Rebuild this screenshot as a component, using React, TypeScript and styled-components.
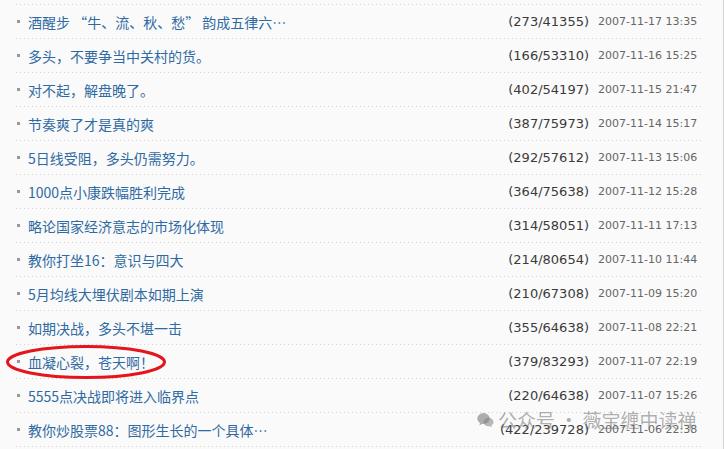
import styled, { createGlobalStyle } from "styled-components";

interface Post {
  title: string;
  replies: number;
  views: number;
  date: string;
  marked?: boolean;
}

const posts: Post[] = [
  { title: "酒醒步 “牛、流、秋、愁” 韵成五律六…", replies: 273, views: 41355, date: "2007-11-17 13:35" },
  { title: "多头，不要争当中关村的货。", replies: 166, views: 53310, date: "2007-11-16 15:25" },
  { title: "对不起，解盘晚了。", replies: 402, views: 54197, date: "2007-11-15 21:47" },
  { title: "节奏爽了才是真的爽", replies: 387, views: 75973, date: "2007-11-14 15:17" },
  { title: "5日线受阻，多头仍需努力。", replies: 292, views: 57612, date: "2007-11-13 15:06" },
  { title: "1000点小康跌幅胜利完成", replies: 364, views: 75638, date: "2007-11-12 15:28" },
  { title: "略论国家经济意志的市场化体现", replies: 314, views: 58051, date: "2007-11-11 17:13" },
  { title: "教你打坐16：意识与四大", replies: 214, views: 80654, date: "2007-11-10 11:44" },
  { title: "5月均线大埋伏剧本如期上演", replies: 210, views: 67308, date: "2007-11-09 15:20" },
  { title: "如期决战，多头不堪一击", replies: 355, views: 64638, date: "2007-11-08 22:21" },
  { title: "血凝心裂，苍天啊！", replies: 379, views: 83293, date: "2007-11-07 22:19", marked: true },
  { title: "5555点决战即将进入临界点", replies: 220, views: 64638, date: "2007-11-07 15:26" },
  { title: "教你炒股票88：图形生长的一个具体…", replies: 422, views: 239728, date: "2007-11-06 22:38" },
];

const GlobalStyle = createGlobalStyle`
  html, body {
    margin: 0;
    padding: 0;
    background: #ffffff;
    overflow: hidden;
  }
`;

// Panel holding the list, with its grey right edge
const Panel = styled.div`
  position: relative;
  width: 686px;
  height: 449px;
  padding: 4px 21px 0 16px;
  background: #fafafa;
  border-right: 1px solid #d4d4d4;
`;

const List = styled.ul`
  list-style: none;
  margin: 0;
  padding: 0;
  background-image: linear-gradient(to right, #d2d2d2 1px, transparent 1px);
  background-size: 4px 1px;
  background-repeat: repeat-x;
  background-position: 0 0;
  padding-top: 1px;
`;

// One post row with dotted rule underneath
const Row = styled.li`
  position: relative;
  display: flex;
  align-items: center;
  height: 33px;
  background-image: linear-gradient(to right, #d2d2d2 1px, transparent 1px);
  background-size: 4px 1px;
  background-repeat: repeat-x;
  background-position: 0 100%;
  padding-bottom: 1px;
`;

const Bullet = styled.span`
  width: 3px;
  height: 3px;
  margin: 0 8px 0 1px;
  background: #999999;
  flex-shrink: 0;
`;

const Title = styled.a`
  flex: 1;
  font-family: "Noto Sans CJK SC", "DejaVu Sans", sans-serif;
  font-size: 14px;
  color: #2f6aa3;
  text-decoration: none;
  white-space: nowrap;
`;

const Count = styled.span`
  font-family: "DejaVu Sans", Verdana, sans-serif;
  font-size: 13px;
  color: #3a3a3a;
  text-align: right;
`;

const DateText = styled.span`
  width: 104px;
  margin-left: 9px;
  font-family: "DejaVu Sans", Verdana, sans-serif;
  font-size: 11px;
  color: #666666;
  white-space: nowrap;
`;

// Red circle drawn around a marked title
const Ring = styled.svg`
  position: absolute;
  left: -10px;
  top: -1px;
  width: 162px;
  height: 36px;
  pointer-events: none;
`;

// WeChat account watermark over the bottom right
const Watermark = styled.div`
  position: absolute;
  left: 477px;
  top: 406px;
  display: flex;
  align-items: center;
  gap: 4px;
  font-family: "Noto Sans CJK SC", sans-serif;
  font-size: 19px;
  color: rgba(110, 110, 110, 0.55);
  white-space: nowrap;
  pointer-events: none;
`;

const WeChatIcon = () => (
  <svg width="17" height="16" viewBox="0 0 17 16">
    <ellipse cx="6.5" cy="6.5" rx="6.2" ry="5.4" fill="rgba(110,110,110,0.55)" />
    <path d="M3 11 L2.4 13.6 L5.6 11.6 Z" fill="rgba(110,110,110,0.55)" />
    <ellipse cx="11.5" cy="10" rx="5" ry="4.3" fill="rgba(130,130,130,0.55)" />
    <path d="M14 13.3 L15 15.6 L12.4 14 Z" fill="rgba(130,130,130,0.55)" />
  </svg>
);

const App = (): JSX.Element => {
  return (
    <>
      <GlobalStyle />
      <Panel>
        <List>
          {posts.map((post) => (
            <Row key={post.date + post.title}>
              <Bullet />
              <Title href="#">{post.title}</Title>
              <Count>
                ({post.replies}/{post.views})
              </Count>
              <DateText>{post.date}</DateText>
              {post.marked && (
                <Ring viewBox="0 0 162 36">
                  <ellipse
                    cx="80"
                    cy="18"
                    rx="78.5"
                    ry="15.5"
                    fill="none"
                    stroke="#e4161c"
                    strokeWidth="3"
                  />
                </Ring>
              )}
            </Row>
          ))}
        </List>
        <Watermark>
          <WeChatIcon />
          <span>公众号 · 薇宝缠中读禅</span>
        </Watermark>
      </Panel>
    </>
  );
};

export default App;
